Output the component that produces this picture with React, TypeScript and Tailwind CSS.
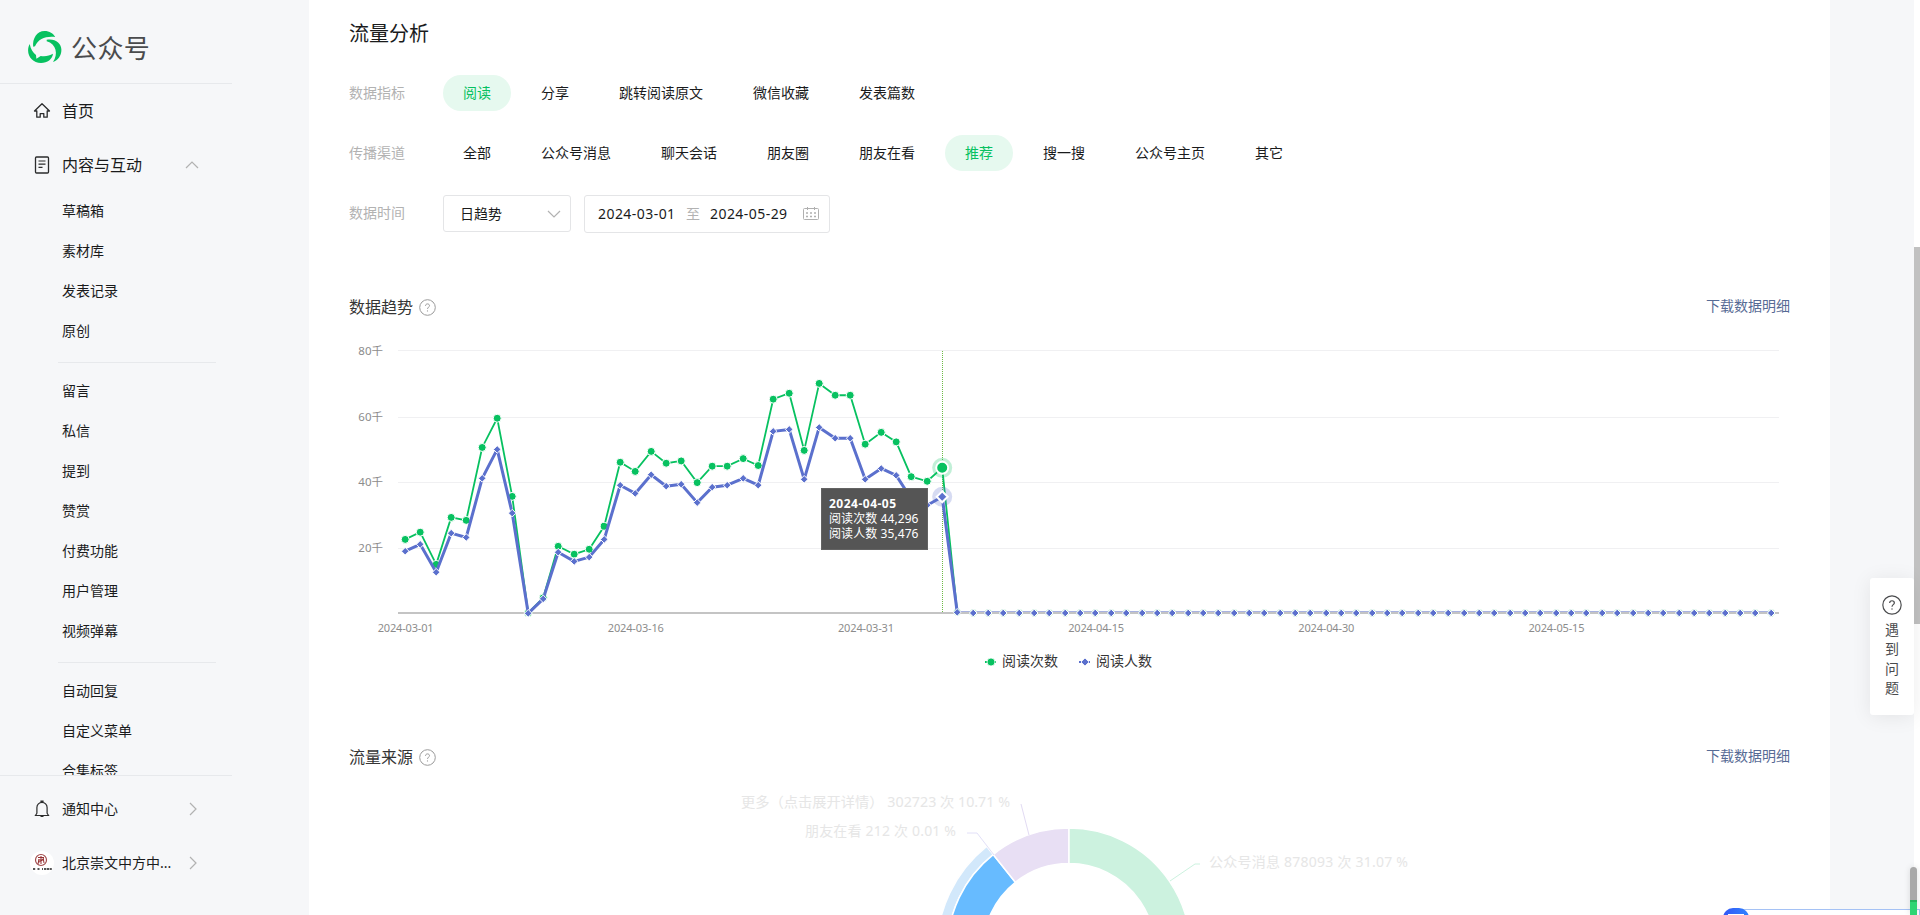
import { useState } from "react";
import { clsx } from "clsx";

const FONT = "font-['Noto_Sans','Noto_Sans_CJK_SC',sans-serif]";

const menuGroups = [
  ["草稿箱", "素材库", "发表记录", "原创"],
  ["留言", "私信", "提到", "赞赏", "付费功能", "用户管理", "视频弹幕"],
  ["自动回复", "自定义菜单", "合集标签"],
];

const metrics = ["阅读", "分享", "跳转阅读原文", "微信收藏", "发表篇数"];
const channels = ["全部", "公众号消息", "聊天会话", "朋友圈", "朋友在看", "推荐", "搜一搜", "公众号主页", "其它"];

// in thousands, one value per day from 2024-03-01
const readCounts = [
  22.5, 24.7, 14.9, 29.2, 28.3, 50.5, 59.4, 35.6, 0.1, 4.7, 20.4, 18, 19.5, 26.5, 46, 43.2, 49.3, 45.7,
  46.4, 39.8, 44.8, 44.8, 47.1, 45, 65.2, 67, 49.6, 70, 66.4, 66.4, 51.5, 55.1, 52.2, 41.6, 40.2, 44.296, 0.4,
];
const readUsers = [
  18.9, 21, 12.5, 24.4, 23.1, 41.1, 49.9, 30.5, 0, 4.4, 18.6, 15.8, 17.1, 22.5, 39, 36.5, 42.2, 38.7,
  39.3, 33.7, 38.4, 39, 41.1, 39, 55.4, 56, 40.8, 56.6, 53.3, 53.3, 40.8, 44.1, 42, 34.9, 32.9, 35.476, 0.3,
];

const gridLines = [
  { label: "80千", y: 27 },
  { label: "60千", y: 94 },
  { label: "40千", y: 159 },
  { label: "20千", y: 225 },
];

const DAYS = 90;
const ACTIVE = 35;
const GREEN = "#07c160";
const BLUE = "#5b70cd";

const xAt = (i: number) => Math.floor(56.5 + i * 15.344) + 0.2;
const yAt = (v: number) => 290.3 - v * 3.284;

function toPoints(values: number[]) {
  return Array.from({ length: DAYS }, (_, i) => ({ x: xAt(i), y: yAt(values[i] ?? 0.15) }));
}

function HelpIcon({ size = 17, className }: { size?: number; className?: string }) {
  return (
    <svg width={size} height={size} viewBox="0 0 17 17" fill="none" stroke="currentColor" className={className}>
      <circle cx="8.5" cy="8.5" r="7.8" strokeWidth="1" />
      <path d="M6.5 6.9c0-1.2.8-2 2-2s2 .8 2 1.8c0 1.4-2 1.6-2 3.2" strokeWidth="1" />
      <circle cx="8.5" cy="11.9" r=".6" fill="currentColor" stroke="none" />
    </svg>
  );
}

function Chevron({ d, className }: { d: string; className?: string }) {
  return (
    <svg width="14" height="14" viewBox="0 0 14 14" fill="none" stroke="#b2b2b2" strokeWidth="1.2" className={className}>
      <path d={d} />
    </svg>
  );
}

function Logo() {
  return (
    <svg width="34" height="33" viewBox="0 0 34 33" fill={GREEN}>
      <path d="M5.200 15.800C4.200 7.500 9 0 16.500 0 21.500 0 25.300 2.400 27.200 5.900 17.500 5 10.500 7.500 7 15.200z" />
      <path d="M18.700 8.800c8.300-1.500 14.700 3.200 14.700 10 0 6-3.400 10.600-8.400 12.200 5.400-8 3.400-18-6.300-20.800z" />
      <path d="M1.700 13C2.600 18 5 21.800 8 24l.4 3.700 4.300-2.700c4.400.6 8.700.1 12.300-2.200C24.300 28.400 19.500 32 13 32 5.500 32 .1 26.200.1 19.500c0-2.500.6-4.800 1.600-6.500z" />
    </svg>
  );
}

function Sidebar() {
  return (
    <aside className="flex h-full w-[309px] shrink-0 flex-col">
      <div className="flex h-[84px] w-[232px] items-center border-b border-[#e7e9ec] pt-3 pl-7">
        <Logo />
        <span className="ml-[9px] text-[26px] leading-none tracking-[0.4px] text-[#4a4b4d]">公众号</span>
      </div>

      <nav className="h-[691px] w-[232px] overflow-hidden text-sm text-[#1a1b1c]">
        <div className="flex h-[54px] items-center pl-[33px] text-base">
          <svg width="18" height="18" viewBox="0 0 18 18" fill="none" stroke="#2b2c2d" strokeWidth="1.3" strokeLinejoin="round">
            <path d="M9 1.800 1.500 9h2.300v6.200h3.400v-3.600h3.600v3.600h3.400V9h2.300z" />
          </svg>
          <span className="ml-[11px]">首页</span>
        </div>
        <div className="flex h-[54px] items-center pl-[33px] text-base">
          <svg width="18" height="18" viewBox="0 0 18 18" fill="none" stroke="#2b2c2d" strokeWidth="1.3">
            <rect x="2.500" y="1" width="13" height="16" rx="1" />
            <path d="M5.500 5h7M5.500 8.200h7M5.500 11.400h4" strokeWidth="1.2" />
          </svg>
          <span className="ml-[11px]">内容与互动</span>
          <Chevron d="M1 10 7 4l6 6" className="ml-[43px]" />
        </div>
        {menuGroups.map((group, i) => (
          <ul key={i} className={clsx(i > 0 && "mt-[10px] border-t border-[#e7e9ec] pt-[9px]", "ml-[58px] w-[158px]")}>
            {group.map((item) => (
              <li key={item} className="flex h-10 items-center pb-[2px] pl-1 whitespace-nowrap">{item}</li>
            ))}
          </ul>
        ))}
      </nav>

      <div className="w-[232px] border-t border-[#e7e9ec] pt-[6px] text-sm text-[#1a1b1c]">
        <div className="flex h-[54px] items-center pl-[33px]">
          <svg width="18" height="18" viewBox="0 0 18 18" fill="none" stroke="#2b2c2d" strokeWidth="1.2">
            <path d="M2.500 15.500h13l-1.400-2.300V7.500a5.100 5.100 0 0 0-10.200 0v5.700zM8 2.200V1.200h2v1M7.500 16.300h3" />
          </svg>
          <span className="ml-[11px] w-[120px]">通知中心</span>
          <Chevron d="M4 1l6 6-6 6" className="ml-1" />
        </div>
        <div className="flex h-[54px] items-center pl-[30px]">
          <svg width="24" height="24" viewBox="0 0 24 24" fill="none">
            <circle cx="12" cy="12" r="12" fill="#fff" />
            <circle cx="11" cy="9" r="5.500" stroke="#a14a4b" strokeWidth="1.200" />
            <path d="M8 6.500h6M8.500 9h5M11 5v8M8.500 11.500l5-3.500M8 13l1-5M13 6l1 6" stroke="#962f31" />
            <path d="M3 18h2.500M7.500 18h2M12 18h1M14 18h8" stroke="#555" strokeWidth="2.200" strokeDasharray="2.200 .6" />
          </svg>
          <span className="ml-2 w-[120px]">北京崇文中方中...</span>
          <Chevron d="M4 1l6 6-6 6" className="ml-1" />
        </div>
      </div>
    </aside>
  );
}

interface FilterRowProps {
  label: string;
  options: string[];
  value: string;
  onChange: (v: string) => void;
}

function FilterRow({ label, options, value, onChange }: FilterRowProps) {
  return (
    <div className="flex h-9 items-center text-sm">
      <span className="w-[94px] shrink-0 text-[#b2b2b2]">{label}</span>
      <div className="flex gap-[10px]">
        {options.map((o) => (
          <button
            key={o}
            onClick={() => onChange(o)}
            className={clsx(
              "h-9 cursor-pointer rounded-full px-5",
              o === value ? "bg-[#e6f9ef] text-[#07c160]" : "text-[#1a1b1c]"
            )}
          >
            {o}
          </button>
        ))}
      </div>
    </div>
  );
}

function SectionHeader({ title }: { title: string }) {
  return (
    <div className="flex h-8 items-center">
      <h3 className="text-base text-[#353535]">{title}</h3>
      <HelpIcon className="ml-[6px] text-[#9a9a9a]" />
      <a className="ml-auto cursor-pointer pb-[3px] text-sm text-[#576b95]">下载数据明细</a>
    </div>
  );
}

function TrendChart() {
  const counts = toPoints(readCounts);
  const users = toPoints(readUsers);
  const line = (pts: { x: number; y: number }[]) => pts.map((p) => `${p.x},${p.y}`).join(" ");

  return (
    <div className="relative h-[418px]">
      <svg width="1441" height="418" className="block">
        {gridLines.map((g) => (
          <g key={g.label}>
            <rect x="49" y={g.y} width="1381" height="1" fill="#f0f0f2" />
            <text x="34" y={g.y === 27 ? 32 : g.y + 4} textAnchor="end" fontSize="11.5" fill="#8c8c8c">{g.label}</text>
          </g>
        ))}
        <rect x="49" y="289" width="1381" height="2" fill="#c4c4c4" />
        {["2024-03-01", "2024-03-16", "2024-03-31", "2024-04-15", "2024-04-30", "2024-05-15"].map((d, i) => (
          <text key={d} x={56.67 + i * 230.16} y="309" textAnchor="middle" fontSize="11" textLength="56" fill="#8c8c8c">{d}</text>
        ))}
        <path d={`M${Math.floor(xAt(ACTIVE)) + 0.5} 28V289`} stroke="#6dbb45" strokeDasharray="1 1" />

        <polyline points={line(counts)} fill="none" stroke={GREEN} strokeWidth="1.800" />
        <circle cx={counts[ACTIVE].x} cy={counts[ACTIVE].y} r="10" fill={GREEN} opacity=".25" />
        {counts.map((p, i) => (
          <circle key={i} cx={p.x} cy={p.y} r={i === ACTIVE ? 6 : i > ACTIVE ? 3.5 : 4} fill={GREEN} stroke="#fff" strokeWidth={i === ACTIVE ? 2 : 1} />
        ))}
        <rect x={xAt(36)} y="288" width={xAt(89) - xAt(36)} height="3" fill="#fff" />
        <path d={`M${xAt(36)} 290H1430`} stroke="#c4c4c4" strokeWidth="2" />
        <polyline points={line(users.slice(0, 37))} fill="none" stroke={BLUE} strokeWidth="3" strokeLinejoin="round" />
        <path d={`M${xAt(36)} 288.500H${xAt(89)}`} stroke="#a8b2e0" />
        <circle cx={users[ACTIVE].x} cy={users[ACTIVE].y} r="10" fill={BLUE} opacity=".25" />
        {users.map((p, i) => {
          const r = i === ACTIVE ? 5.5 : 3.8;
          const y = i > ACTIVE + 1 ? 290 : p.y;
          return (
            <g key={i}>
              {i > ACTIVE + 1 && <circle cx={p.x} cy={y} r="3.500" fill="#fff" stroke="#a9e8c6" strokeWidth=".8" strokeDasharray="1.500 1.500" />}
              <path d={`M${p.x} ${y - r}l${r} ${r}-${r} ${r}-${r}-${r}z`} fill={BLUE} stroke="#fff" strokeWidth={i === ACTIVE ? 2 : 1} />
            </g>
          );
        })}

        <g fontSize="14" fill="#353535">
          <path d="M636 339h12" stroke={GREEN} strokeWidth="2" strokeDasharray="3 1" />
          <circle cx="642" cy="339" r="4" fill={GREEN} stroke="#fff" strokeWidth=".8" />
          <text x="653" y="343">阅读次数</text>
          <path d="M730 339h12" stroke={BLUE} strokeWidth="2" strokeDasharray="2 1" />
          <path d="M736 335l4 4-4 4-4-4z" fill={BLUE} stroke="#fff" strokeWidth=".8" />
          <text x="747" y="343">阅读人数</text>
        </g>
      </svg>
      <div className="absolute top-[165px] left-[472px] h-[62px] w-[107px] border border-[#636363] bg-[#555] pt-[7px] pl-[7px] text-xs leading-[15px] whitespace-nowrap text-white">
        <b className="block tracking-[0.5px]">2024-04-05</b>
        <p className="tracking-[0.08px]">阅读次数 44,296</p>
        <p className="tracking-[0.08px]">阅读人数 35,476</p>
      </div>
    </div>
  );
}

// angle is measured clockwise from 12 o'clock
function slice(from: number, to: number, inner: number, outer: number) {
  const at = (deg: number, r: number) => {
    const a = (deg * Math.PI) / 180;
    return `${720 + r * Math.sin(a)} ${176.5 - r * Math.cos(a)}`;
  };
  return `M${at(from, outer)}A${outer} ${outer} 0 0 1 ${at(to, outer)}L${at(to, inner)}A${inner} ${inner} 0 0 0 ${at(from, inner)}Z`;
}

function SourceChart() {
  return (
    <svg width="1441" height="142" className="block overflow-hidden">
      <g stroke="#fff" strokeWidth="1.500" strokeLinejoin="round">
        <path d={slice(210, 321.4, 121.5, 132)} fill="#d2e8fb" />
        <path d={slice(210, 321.4, 86, 121.5)} fill="#67bbff" />
        <path d={slice(321.4, 360, 86, 121.5)} fill="#e8dff4" />
        <path d={slice(0, 111.9, 86, 121.5)} fill="#ccf2df" />
      </g>
      <g fill="none" strokeWidth="1">
        <path d="M680 62 672 31" stroke="#e2dbf3" />
        <path d="M645 82 628 60h-10" stroke="#e2e0f8" />
        <path d="M821 108 846 91h5" stroke="#ccf2df" />
      </g>
      <g fontSize="14" fill="#e6e6e6">
        <text x="392" y="34" textLength="269" lengthAdjust="spacingAndGlyphs">更多（点击展开详情） 302723 次 10.71 %</text>
        <text x="456" y="63" textLength="151">朋友在看 212 次 0.01 %</text>
        <text x="860" y="94" textLength="199">公众号消息 878093 次 31.07 %</text>
      </g>
    </svg>
  );
}

function DateRange() {
  return (
    <div className="flex h-[38px] w-[246px] items-center rounded-[3px] border border-[#e4e5e7] pl-[13px] text-sm whitespace-nowrap text-[#1a1b1c]">
      <span className="w-[78px] tracking-[0.45px]">2024-03-01</span>
      <span className="mx-[10px] text-[#b2b2b2]">至</span>
      <span className="w-[78px] tracking-[0.45px]">2024-05-29</span>
      <svg width="16" height="14" viewBox="0 0 16 14" fill="none" stroke="#b0b0b0" className="ml-[15px]">
        <rect x=".5" y="1.500" width="15" height="11" rx="1" />
        <path d="M4.500 0v3M11.500 0v3" />
        <path d="M3 6h2M7 6h2M11 6h2M3 9.500h2M7 9.500h2M11 9.500h2" strokeWidth="1.500" />
      </svg>
    </div>
  );
}

export default function App() {
  const [metric, setMetric] = useState("阅读");
  const [channel, setChannel] = useState("推荐");

  return (
    <div className={clsx(FONT, "relative flex h-[915px] w-[1920px] overflow-hidden bg-[#f6f7f9]")}>
      <Sidebar />

      <main className="h-full w-[1521px] shrink-0 overflow-hidden bg-white px-10">
        <h2 className="flex h-[75px] items-center pb-[7px] text-xl text-[#1a1b1c]">流量分析</h2>
        <div className="flex flex-col gap-6">
          <FilterRow label="数据指标" options={metrics} value={metric} onChange={setMetric} />
          <FilterRow label="传播渠道" options={channels} value={channel} onChange={setChannel} />
          <div className="flex h-9 items-start text-sm">
            <span className="w-[94px] shrink-0 leading-9 text-[#b2b2b2]">数据时间</span>
            <div className="mr-[13px] flex h-[37px] w-32 items-center justify-between rounded-[3px] border border-[#e4e5e7] pr-[9px] pl-4 text-[#1a1b1c]">
              日趋势
              <Chevron d="M1 4l6 6 6-6" />
            </div>
            <DateRange />
          </div>
        </div>

        <section className="mt-[60px]">
          <SectionHeader title="数据趋势" />
          <TrendChart />
        </section>
        <section>
          <SectionHeader title="流量来源" />
          <SourceChart />
        </section>
      </main>

      {/* page scrollbar */}
      <div className="ml-auto h-full w-[6px] bg-white pt-[247px]">
        <div className="h-[377px] bg-[#c1c1c1]" />
      </div>

      <div className="absolute top-[578px] left-[1870px] flex h-[137px] w-11 flex-col items-center rounded-[3px] bg-white pt-[17px] text-sm text-[#4a4b4d] shadow-[0_2px_20px_rgba(0,0,0,0.08)]">
        <HelpIcon size={20} />
        <span className="mt-[5px] w-[14px] text-center leading-[19.400px]">遇到问题</span>
      </div>

      {/* docked assistant, mostly below the fold */}
      <div className="absolute top-[909px] left-[1736px] h-5 w-[184px] border-t border-r border-[#a5c2f5] bg-white" />
      <div className="absolute top-[908px] left-[1723px] flex h-8 w-[26px] justify-center rounded-t-[10px] bg-linear-to-r from-[#3455f5] to-[#3183ff] pt-[6px]">
        <div className="h-3 w-4 bg-white" />
      </div>
      <div className="absolute top-[867px] left-[1910px] h-12 w-[7px] overflow-hidden rounded-t-full bg-[#a9a9a9] shadow-[0_0_6px_rgba(0,0,0,0.12)]">
        <div className="mt-[33px] h-[15px] border-t-2 border-[#25b35c] bg-[#2ed573]" />
      </div>
    </div>
  );
}
